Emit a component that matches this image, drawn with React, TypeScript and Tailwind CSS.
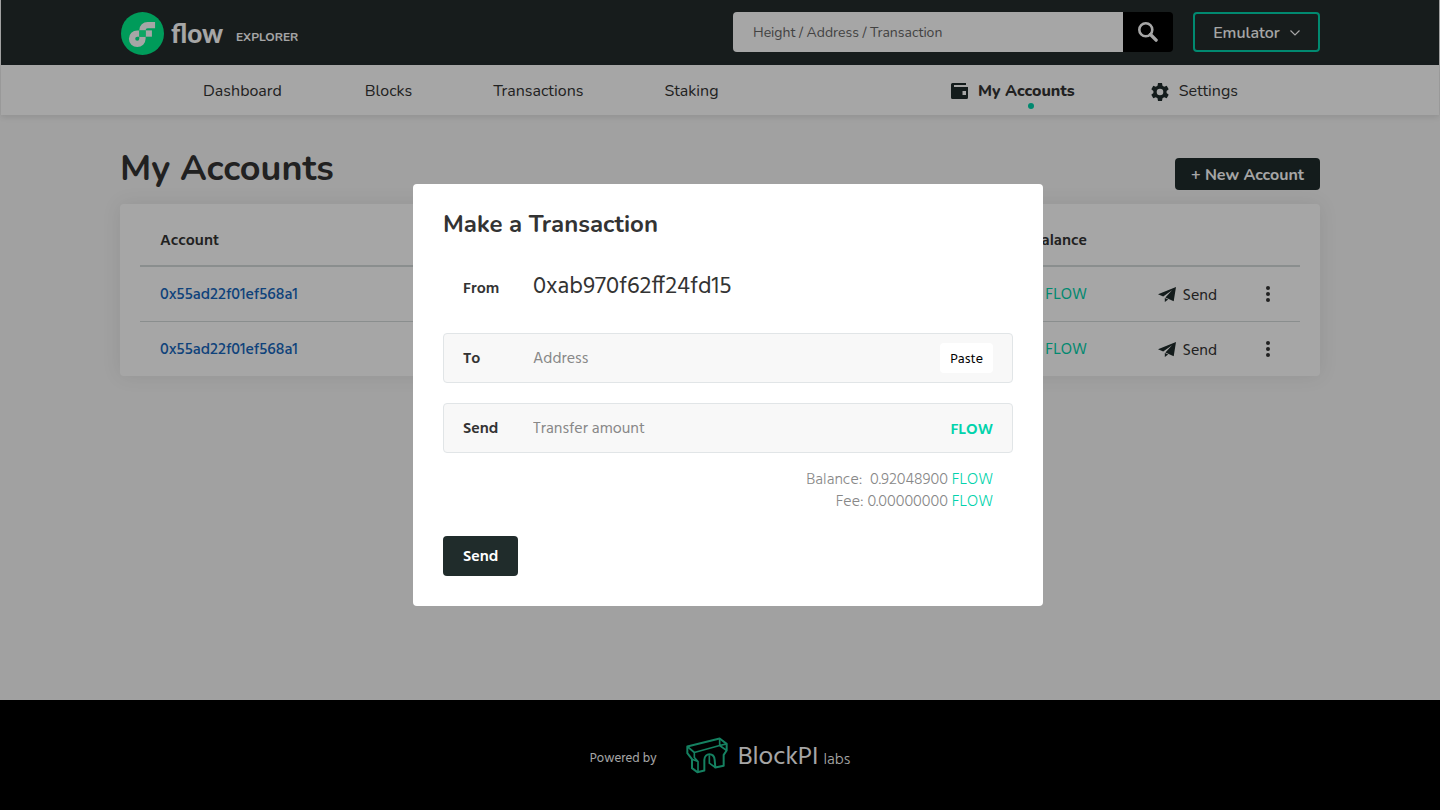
import { useId } from "react";
import type { ReactNode } from "react";

const nunito = "font-['Nunito','Noto_Sans',sans-serif]";
const hind = "font-['Hind','Open_Sans',sans-serif]";

function FlowMark() {
  return (
    <svg viewBox="0 0 101 101" className="size-[43px]" aria-hidden="true">
      <circle cx="50.5" cy="50.5" r="50.5" fill="#00ef8b" />
      <path fill="#fff" d="M57.82 43.18h14.8v14.8h-14.8z" />
      <path fill="#fff" d="M43.01 62.79a4.81 4.81 0 1 1-4.81-4.81H43V43.18H38.2a19.62 19.62 0 1 0 19.62 19.61V57.98H43.01Z" />
      <path fill="#fff" d="M62.63 38h17.4V23.2h-17.4A19.62 19.62 0 0 0 43.01 42.81v.37h14.81V42.81A4.82 4.82 0 0 1 62.63 38Z" />
      <path fill="#16ff99" d="M43.01 43.18h14.81v14.8H43.01z" />
    </svg>
  );
}

function SearchIcon() {
  return (
    <svg viewBox="0 0 20 20" className="size-5" fill="none" stroke="#fff" aria-hidden="true">
      <circle cx="7.8" cy="7.8" r="6.5" strokeWidth="2.6" />
      <path d="m12.5 12.5 5.6 5.6" strokeWidth="3.4" strokeLinecap="round" />
    </svg>
  );
}

function WalletIcon() {
  return (
    <svg viewBox="0 0 17 16" className="h-4 w-[17px]" fill="#202c2b" aria-hidden="true">
      <path fillRule="evenodd" d="M1.5 0H15v2H3v2h14v10.500a1.500 1.500 0 0 1-1.500 1.500h-14A1.500 1.500 0 0 1 0 14.500v-13A1.500 1.500 0 0 1 1.500 0ZM11.500 8v4H15V8Z" />
    </svg>
  );
}

function GearIcon() {
  return (
    <svg viewBox="0 0 18 18" className="mt-[2px] size-[18px]" fill="#202c2b" aria-hidden="true">
      <path
        fillRule="evenodd"
        d="M7 0h4l.5 2.700 1.700 1 2.500-.900 2 3.400L15.600 8v2l2.100 1.800-2 3.400-2.500-.900-1.700 1L11 18H7l-.5-2.700-1.700-1-2.500.900-2-3.400L2.400 10V8L.3 6.200l2-3.400 2.500.900 1.700-1ZM9 5.700a3.300 3.300 0 1 0 0 6.600 3.300 3.300 0 0 0 0-6.600Z"
      />
    </svg>
  );
}

function PlaneIcon() {
  return (
    <svg viewBox="0 0 18 15" className="mt-[2px] h-[15px] w-[18px]" fill="#202c2b" aria-hidden="true">
      <path d="M18 0 0 7.200l5.200 2.200L14 3.200 7.400 10.500l8.300 3.700Z" />
      <path d="M6.800 11v4l3.400-2.500Z" />
    </svg>
  );
}

function BlockPIMark() {
  return (
    <svg viewBox="318 52 126 110" className="h-[37px] w-[42px]" fill="none" stroke="#21c695" strokeWidth="6" strokeLinejoin="round" aria-hidden="true">
      <path d="M322 80 419 56l21 16v20l-9 13v33l-25 5-2-23c-2-22-30-22-31 0v32l-21 5-16-12v-27l-14-18Z" />
      <path d="m322 80 21 18 76-21 21 15M419 56v21l21-5M343 98v15l11 12v32M336 118l18 7M388 106v24l18 13" strokeWidth="5" />
    </svg>
  );
}

function NavLink({ children, className }: { children: ReactNode; className: string }) {
  return (
    <a href="#" className={"flex items-center pt-[2px] text-[16px] text-[#333] " + className}>
      {children}
    </a>
  );
}

function AccountRow({ last }: { last?: boolean }) {
  return (
    <tr className={last ? "h-[55px]" : "h-[55px] border-b border-[#d5dada]"}>
      <td className="pt-[3px] pl-5 text-left">
        <a href="#" className="text-[16px] font-medium text-[#1767bd]">0x55ad22f01ef568a1</a>
      </td>
      <td className="pt-[3px] text-right text-[16px] text-[#333]">
        0.92 <span className="text-[#02d3ac]">FLOW</span>
      </td>
      <td className="w-[130px]">
        <button type="button" className="ml-auto flex items-center gap-[7px] text-[16px] text-[#333]">
          <PlaneIcon />
          <span className="pt-1">Send</span>
        </button>
      </td>
      <td className="w-[83px] pl-[18px] text-center">
        <button type="button" aria-label="More actions" className="align-middle">
          <svg viewBox="0 0 4 16" className="h-4 w-1" fill="#333" aria-hidden="true">
            <circle cx="2" cy="2" r="2" />
            <circle cx="2" cy="8" r="2" />
            <circle cx="2" cy="14" r="2" />
          </svg>
        </button>
      </td>
    </tr>
  );
}

function Field({ label, placeholder, children }: { label: string; placeholder: string; children: ReactNode }) {
  const id = useId();
  return (
    <div className="flex h-[50px] items-center rounded border border-[#e1e5e7] bg-[#f8f8f8] px-[19px]">
      <label htmlFor={id} className="w-[70px] pt-[2px] text-[16px] font-semibold text-[#333]">{label}</label>
      <input id={id} placeholder={placeholder} className="min-w-0 flex-1 bg-transparent pt-[2px] text-[16px] outline-none placeholder:text-[#888]" />
      {children}
    </div>
  );
}

export default function App() {
  return (
    <div className={"flex min-h-screen flex-col bg-[#f7f7f7] " + nunito}>
      <div className="px-px">
        <header className="bg-[#242b2c] pb-px">
          <div className="mx-auto flex h-16 max-w-[1200px] items-center">
            <a href="#" className="flex items-center pt-[2px] pl-px text-white">
              <FlowMark />
              <span className="ml-[7px] font-['Lato',sans-serif] text-[26px] leading-8 font-black">flow</span>
              <span className="mt-2 ml-[13px] text-[12px] font-bold">EXPLORER</span>
            </a>
            <form className="ml-auto flex h-10 w-[440px] overflow-hidden rounded" onSubmit={(e) => e.preventDefault()}>
              <input aria-label="Search" placeholder="Height / Address / Transaction" className="min-w-0 flex-1 bg-white px-5 text-[14px] outline-none placeholder:text-[#666]" />
              <button type="submit" aria-label="Search" className="flex w-[50px] items-center justify-center bg-black">
                <SearchIcon />
              </button>
            </form>
            <button type="button" className="ml-5 flex h-10 w-[127px] items-center justify-center gap-[10px] rounded border-2 border-[#02d3ac] pt-[2px] text-[16px] font-semibold text-white">
              Emulator
              <svg viewBox="0 0 10 6" className="h-[6px] w-[10px]" fill="none" stroke="#fff" strokeWidth="1.2" aria-hidden="true">
                <path d="m.5.5 4.500 4.500L9.500.5" />
              </svg>
            </button>
          </div>
        </header>
        <nav className="bg-white shadow-[0_2px_6px_rgba(0,0,0,0.1)]">
          <div className="mx-auto flex h-[50px] max-w-[1200px] items-stretch">
            <NavLink className="ml-[83px]">Dashboard</NavLink>
            <NavLink className="ml-[83px]">Blocks</NavLink>
            <NavLink className="ml-[81px]">Transactions</NavLink>
            <NavLink className="ml-[81px]">Staking</NavLink>
            <NavLink className="relative ml-auto gap-[10px] font-extrabold">
              <WalletIcon />
              My Accounts
              <span className="absolute bottom-[6px] left-[77px] size-[6px] rounded-full bg-[#02d3ac]" />
            </NavLink>
            <NavLink className="mr-[82px] ml-[76px] gap-[10px]">
              <GearIcon />
              Settings
            </NavLink>
          </div>
        </nav>
      </div>

      <main className="mx-auto w-full max-w-[1200px] flex-1">
        <div className="flex items-end justify-between pt-[27px]">
          <h1 className="text-[36px] leading-[54px] font-bold text-[#333]">My Accounts</h1>
          <button type="button" className="mb-[6px] h-8 rounded bg-[#202c2b] px-4 pt-[2px] text-[16px] font-bold text-white">+ New Account</button>
        </div>
        <section className={"mt-2 rounded bg-white px-5 shadow-[0_0_20px_rgba(0,0,0,0.08)] " + hind}>
          <table className="w-full border-collapse">
            <thead>
              <tr className="h-[62px] border-b-2 border-[#d5dada] text-[16px] text-[#333]">
                <th className="pt-3 pl-5 text-left font-semibold">Account</th>
                <th className="pt-3 text-right font-semibold">Balance</th>
                <th />
                <th />
              </tr>
            </thead>
            <tbody>
              <AccountRow />
              <AccountRow last />
            </tbody>
          </table>
        </section>
      </main>

      <footer className={"flex h-[110px] items-center justify-center bg-black text-white " + hind}>
        <span className="pt-[7px] text-[13px]">Powered by</span>
        <span className="ml-[29px] flex items-center gap-[10px]">
          <BlockPIMark />
          <span className="flex items-baseline gap-[5px] pt-[6px]">
            <span className="text-[26px] leading-8">BlockPI</span>
            <span className="text-[16px] font-light">labs</span>
          </span>
        </span>
      </footer>

      <div className={"fixed inset-0 z-10 flex items-start justify-center bg-black/35 pt-[184px] pl-4 " + hind}>
        <div role="dialog" aria-modal="true" aria-labelledby="dialog-title" className="w-[630px] rounded bg-white px-[30px] pt-[25px] pb-[30px]">
          <h2 id="dialog-title" className={"text-[24px] leading-[30px] font-bold text-[#333] " + nunito}>Make a Transaction</h2>
          <div className="mt-[31px] flex items-baseline pl-5 text-[#333]">
            <span className="w-[70px] text-[16px] font-semibold">From</span>
            <span className="text-[24px] leading-[34px]">0xab970f62ff24fd15</span>
          </div>
          <form onSubmit={(e) => e.preventDefault()}>
            <div className="mt-[29px] flex flex-col gap-5">
              <Field label="To" placeholder="Address">
                <button type="button" className="h-[30px] rounded bg-white px-[10px] pt-[2px] text-[14px] text-black">Paste</button>
              </Field>
              <Field label="Send" placeholder="Transfer amount">
                <span className="pt-1 text-[16px] font-semibold text-[#02d3ac]">FLOW</span>
              </Field>
            </div>
            <div className="mt-4 pr-5 text-right text-[16px] leading-[22px] font-light text-[#888]">
              <p>Balance:&nbsp; 0.92048900 <span className="text-[#02d3ac]">FLOW</span></p>
              <p>Fee: 0.00000000 <span className="text-[#02d3ac]">FLOW</span></p>
            </div>
            <button type="submit" className="mt-[23px] h-10 rounded bg-[#202c2b] px-5 pt-[2px] text-[16px] font-semibold text-white">Send</button>
          </form>
        </div>
      </div>
    </div>
  );
}
